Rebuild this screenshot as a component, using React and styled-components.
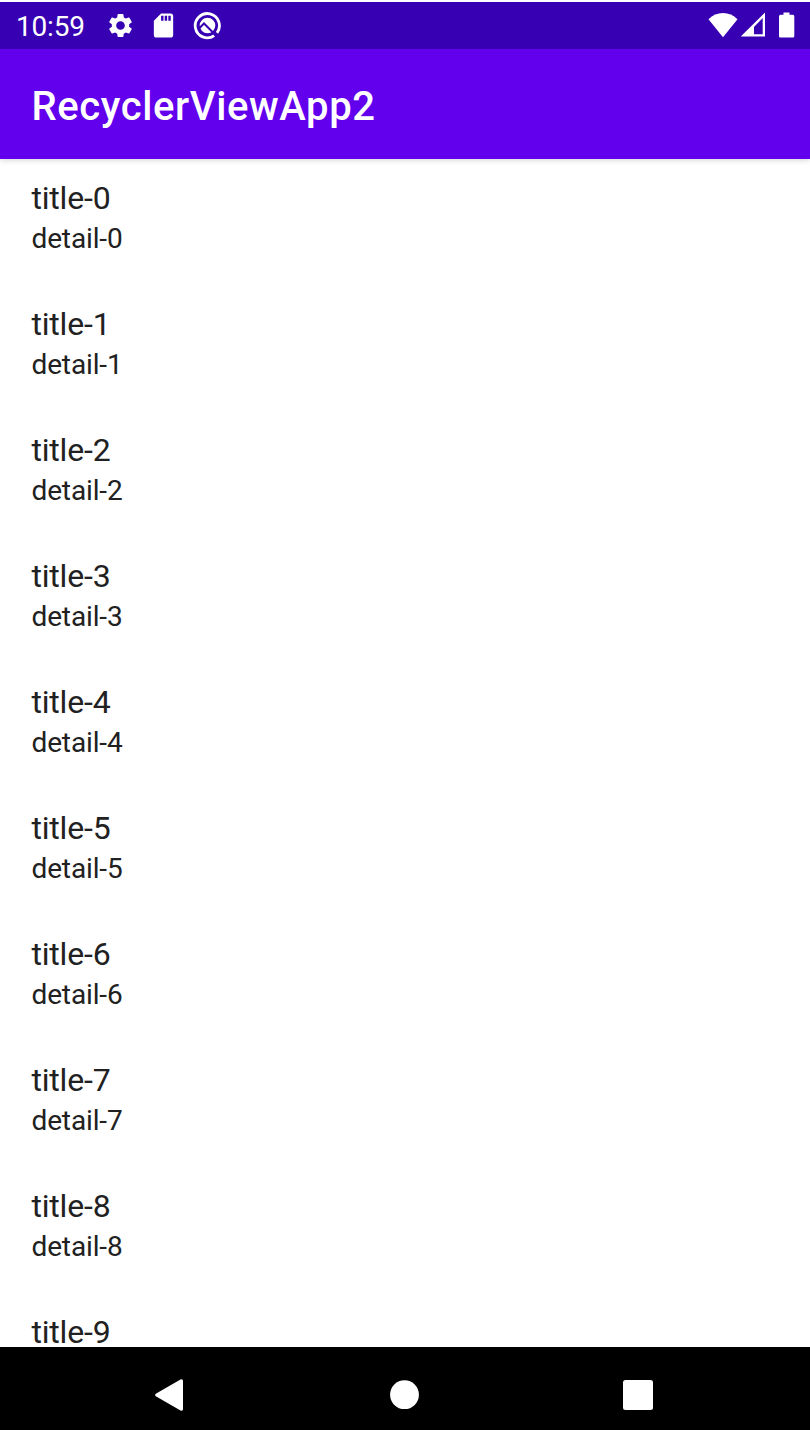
import React from "react";
import styled, { createGlobalStyle } from "styled-components";
import { MdSettings, MdSdCard } from "react-icons/md";

const GlobalStyle = createGlobalStyle`
  * { box-sizing: border-box; }
  body { margin: 0; background: #fff; font-family: Roboto, sans-serif; }
`;

const Screen = styled.div`
  width: 810px;
  height: 1430px;
  padding-top: 2px;
  display: flex;
  flex-direction: column;
  overflow: hidden;
  background: #fff;
`;

const StatusBar = styled.header`
  flex: none;
  height: 47px;
  padding: 0 15px 0 16px;
  display: flex;
  align-items: center;
  justify-content: space-between;
  background: #3700b3;
  color: #fff;
  z-index: 2;
`;

const StatusGroup = styled.div`
  display: flex;
  align-items: center;
  gap: ${(p) => p.$gap}px;
  padding-bottom: ${(p) => p.$lift || 0}px;
  svg { display: block; }
`;

const Clock = styled.span`
  width: 75px;
  font-size: 28px;
  line-height: 46px;
  padding-top: 3px;
  letter-spacing: -0.2px;
`;

const AppBar = styled.div`
  flex: none;
  height: 110px;
  padding: 5px 32px 0 31.5px;
  display: flex;
  align-items: center;
  background: #6200ee;
  color: #fff;
  box-shadow: 0 1px 6px rgba(0, 0, 0, 0.18);
  z-index: 1;
`;

const AppTitle = styled.h1`
  margin: 0;
  font-size: 40px;
  font-weight: 500;
  line-height: 49px;
  letter-spacing: 0.6px;
`;

const List = styled.main`
  flex: 1;
  min-height: 0;
  overflow: hidden;
`;

const Row = styled.section`
  height: 126px;
  padding: 19px 32px 0 31.5px;
  color: #212121;
`;

const Title = styled.div`
  font-size: 32px;
  line-height: 40px;
  letter-spacing: -0.2px;
`;

const Detail = styled.div`
  font-size: 28px;
  line-height: 42px;
  letter-spacing: -0.14px;
`;

const NavBar = styled.nav`
  flex: none;
  height: 83px;
  padding: 12px 154px 0 151px;
  display: flex;
  align-items: center;
  justify-content: space-between;
  background: #000;
`;

const NavIcon = styled.svg`
  display: block;
  width: 36px;
  height: 36px;
  fill: #fff;
`;

const rows = Array.from({ length: 10 }, (_, i) => i);

export default function App() {
  return (
    <>
      <GlobalStyle />
      <Screen>
        <StatusBar>
          <StatusGroup $gap={14.5}>
            <Clock>10:59</Clock>
            <MdSettings size={29} />
            <MdSdCard size={29} />
            <svg width="29" height="29" viewBox="0 0 29 29" fill="none">
              <path d="M21.200 24.600A12.100 12.100 0 1 1 24 21.900" stroke="#fff" strokeWidth="2.800" />
              <circle cx="14.500" cy="14.500" r="7.800" fill="#fff" />
              <path d="M6 17.500l5-5L24 25.500" stroke="#3700b3" strokeWidth="2" />
            </svg>
          </StatusGroup>
          <StatusGroup $gap={3} $lift={2}>
            <svg width="30" height="26" viewBox="0 0 30 26" fill="#fff">
              <path d="M15 25.300L.5 7.300Q6.800 1 15 1t14.500 6.300z" />
            </svg>
            <svg width="25" height="26" viewBox="0 0 25 26" fill="#fff">
              <path fillRule="evenodd" d="M-.4 24.600L24 .5v24.100zM13 22.300h8.700V6L13 15z" />
            </svg>
            <svg width="26" height="26" viewBox="0 0 26 26" fill="#fff">
              <path d="M14.500 .5h6v2.200h3.300a1.500 1.500 0 0 1 1.500 1.500v20a1.300 1.300 0 0 1-1.300 1.300H11.300A1.300 1.300 0 0 1 10 24.200v-20a1.500 1.500 0 0 1 1.500-1.500h3z" />
            </svg>
          </StatusGroup>
        </StatusBar>
        <AppBar>
          <AppTitle>RecyclerViewApp2</AppTitle>
        </AppBar>
        <List>
          {rows.map((i) => (
            <Row key={i}>
              <Title>title-{i}</Title>
              {i < 9 && <Detail>detail-{i}</Detail>}
            </Row>
          ))}
        </List>
        <NavBar>
          <NavIcon viewBox="0 0 36 36">
            <path d="M4.800 16.800L29.500 2.500Q32 1.500 32 4v28q0 2.500-2.500 1.500L4.800 19.200Q3 18 4.800 16.800z" />
          </NavIcon>
          <NavIcon viewBox="0 0 36 36">
            <circle cx="18.500" cy="17.700" r="14.400" />
          </NavIcon>
          <NavIcon viewBox="0 0 36 36">
            <rect x="3" y="3" width="30" height="30" rx="2.500" />
          </NavIcon>
        </NavBar>
      </Screen>
    </>
  );
}
